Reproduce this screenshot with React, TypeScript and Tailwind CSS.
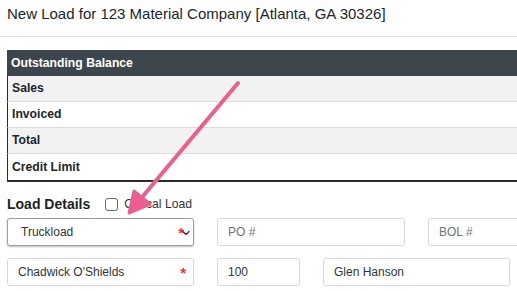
import { ChevronDown } from "lucide-react"

const rows = [
  { label: "Sales", striped: true },
  { label: "Invoiced", striped: false },
  { label: "Total", striped: true },
  { label: "Credit Limit", striped: false },
]

function Field({ text, placeholder, width, required, select }: { text: string; placeholder?: boolean; width: string; required?: boolean; select?: boolean }) {
  return (
    <div
      className={`relative flex h-[28px] shrink-0 items-center rounded-[3px] border bg-white px-[10px] text-[12px] ${width} ${
        select ? "border-[#9aa0a6] shadow-[0_1px_2px_rgba(0,0,0,0.25)]" : "border-[#d6d9dc]"
      } ${placeholder ? "text-[#6c757d]" : "text-[#333]"}`}
    >
      <span className={select ? "pl-[3px]" : ""}>{text}</span>
      {required && (
        <span className={`absolute top-[3px] text-[15px] font-bold text-[#dc3545] ${select ? "right-[9px]" : "right-[7px]"}`}>*</span>
      )}
      {select && <ChevronDown className="absolute right-[1px] top-[8px] h-[12px] w-[12px] text-[#333]" strokeWidth={2.5} />}
    </div>
  )
}

export default function App() {
  return (
    <div className="relative h-[291px] w-[517px] overflow-hidden bg-white font-['Liberation_Sans',Arial,sans-serif] text-[#212529]">
      {/* Header */}
      <div className="flex h-[37px] items-center border-b border-[#e3e3e3] px-[7px] pb-[8px] text-[15px]">
        New Load for 123 Material Company [Atlanta, GA 30326]
      </div>

      {/* Balance table */}
      <div className="ml-[7px] mt-[13px] w-[540px] border-b-2 border-[#2b2b2b] text-[12.2px] font-bold">
        <div className="flex h-[26px] items-center bg-[#3d464d] px-[4px] text-white">Outstanding Balance</div>
        {rows.map((r) => (
          <div
            key={r.label}
            className={`flex h-[26px] items-center border-b border-l border-[#dcdcdc] border-l-[#2b2b2b] px-[4px] last:border-b-0 ${
              r.striped ? "bg-[#f2f2f2]" : "bg-white"
            }`}
          >
            {r.label}
          </div>
        ))}
      </div>

      {/* Load details */}
      <div className="mt-[13px] flex h-[18px] items-center px-[7px]">
        <span className="text-[14px] font-semibold text-[#222]">Load Details</span>
        <span className="ml-[15px] h-[13px] w-[13px] rounded-[3px] border border-[#666] bg-white" />
        <span className="ml-[6px] text-[12.2px] text-[#333]">Critical Load</span>
      </div>

      <div className="mt-[5px] flex gap-[23px] px-[7px]">
        <Field text="Truckload" width="w-[187px]" required select />
        <Field text="PO #" width="w-[188px]" placeholder />
        <Field text="BOL #" width="w-[188px]" placeholder />
      </div>

      <div className="mt-[12px] flex gap-[23px] px-[7px]">
        <Field text="Chadwick O'Shields" width="w-[187px]" required />
        <Field text="100" width="w-[83px]" />
        <Field text="Glen Hanson" width="w-[187px]" />
      </div>

      {/* Annotation arrow */}
      <svg className="pointer-events-none absolute left-0 top-0" width="517" height="291" viewBox="0 0 517 291">
        <line x1="238" y1="83" x2="138" y2="202" stroke="#ea5f8f" strokeWidth="4" strokeLinecap="round" />
        <polygon points="129,213 134,191 150,204" fill="#ea5f8f" stroke="#ea5f8f" strokeWidth="3" strokeLinejoin="round" />
      </svg>
    </div>
  )
}
